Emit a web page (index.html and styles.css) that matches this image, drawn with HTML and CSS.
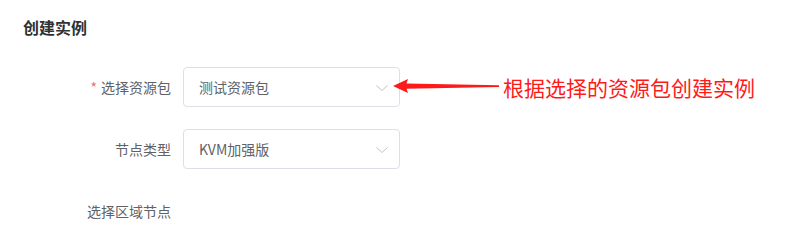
FILE: index.html
```html
<!DOCTYPE html>
<html lang="zh-CN">
<head>
<meta charset="utf-8">
<title>创建实例</title>
<link rel="stylesheet" href="styles.css">
</head>
<body>
<div class="page">
  <h2 class="title">创建实例</h2>
  <div class="form">
    <div class="form-item has-note">
      <label class="label"><span class="req">*</span>选择资源包</label>
      <div class="select">
        <span class="value">测试资源包</span>
        <svg class="chev" width="12" height="8" viewBox="0 0 12 8"><path d="M0.5 1.5 L6 6.5 L11.5 1.5" fill="none" stroke="#C0C4CC" stroke-width="1"/></svg>
      </div>
      <div class="note">
        <svg class="arrow" width="110" height="20" viewBox="0 0 110 20"><path d="M1 9 L16 2 L14.5 6.5 L107 8.3 L107 10 L14.5 11.8 L16 16 Z" fill="#FF1A1A"/></svg>
        <span class="note-text">根据选择的资源包创建实例</span>
      </div>
    </div>
    <div class="form-item">
      <label class="label">节点类型</label>
      <div class="select">
        <span class="value">KVM加强版</span>
        <svg class="chev" width="12" height="8" viewBox="0 0 12 8"><path d="M0.5 1.5 L6 6.5 L11.5 1.5" fill="none" stroke="#C0C4CC" stroke-width="1"/></svg>
      </div>
    </div>
    <div class="form-item">
      <label class="label">选择区域节点</label>
    </div>
  </div>
</div>
</body>
</html>
```
FILE: styles.css
```css
* { box-sizing: border-box; }
body {
  margin: 0;
  background: #fff;
  font-family: "Noto Sans CJK SC", "Microsoft YaHei", "Liberation Sans", sans-serif;
}
.page {
  padding: 17px 0 0 23px;
}
.title {
  margin: 0 0 30px;
  font-size: 16px;
  line-height: 20px;
  font-weight: bold;
  color: #303133;
}
.form-item {
  display: flex;
  align-items: flex-start;
  margin-bottom: 22px;
  position: relative;
}
.label {
  width: 160px;
  padding-right: 12px;
  text-align: right;
  font-size: 14px;
  line-height: 40px;
  color: #606266;
}
.req {
  color: #F56C6C;
  margin-right: 4px;
}
.select {
  width: 217px;
  height: 40px;
  border: 1px solid #DCDFE6;
  border-radius: 4px;
  display: flex;
  align-items: center;
  justify-content: space-between;
  padding: 0 11px 0 15px;
}
.value {
  font-size: 14px;
  color: #606266;
}
.chev { display: block; margin-top: 1px; }
.note {
  position: absolute;
  left: 369px;
  top: 8px;
  display: flex;
  align-items: center;
}
.arrow { display: block; }
.note-text {
  margin-left: 1px;
  font-size: 21px;
  line-height: 24px;
  color: #FF1A1A;
}
```
